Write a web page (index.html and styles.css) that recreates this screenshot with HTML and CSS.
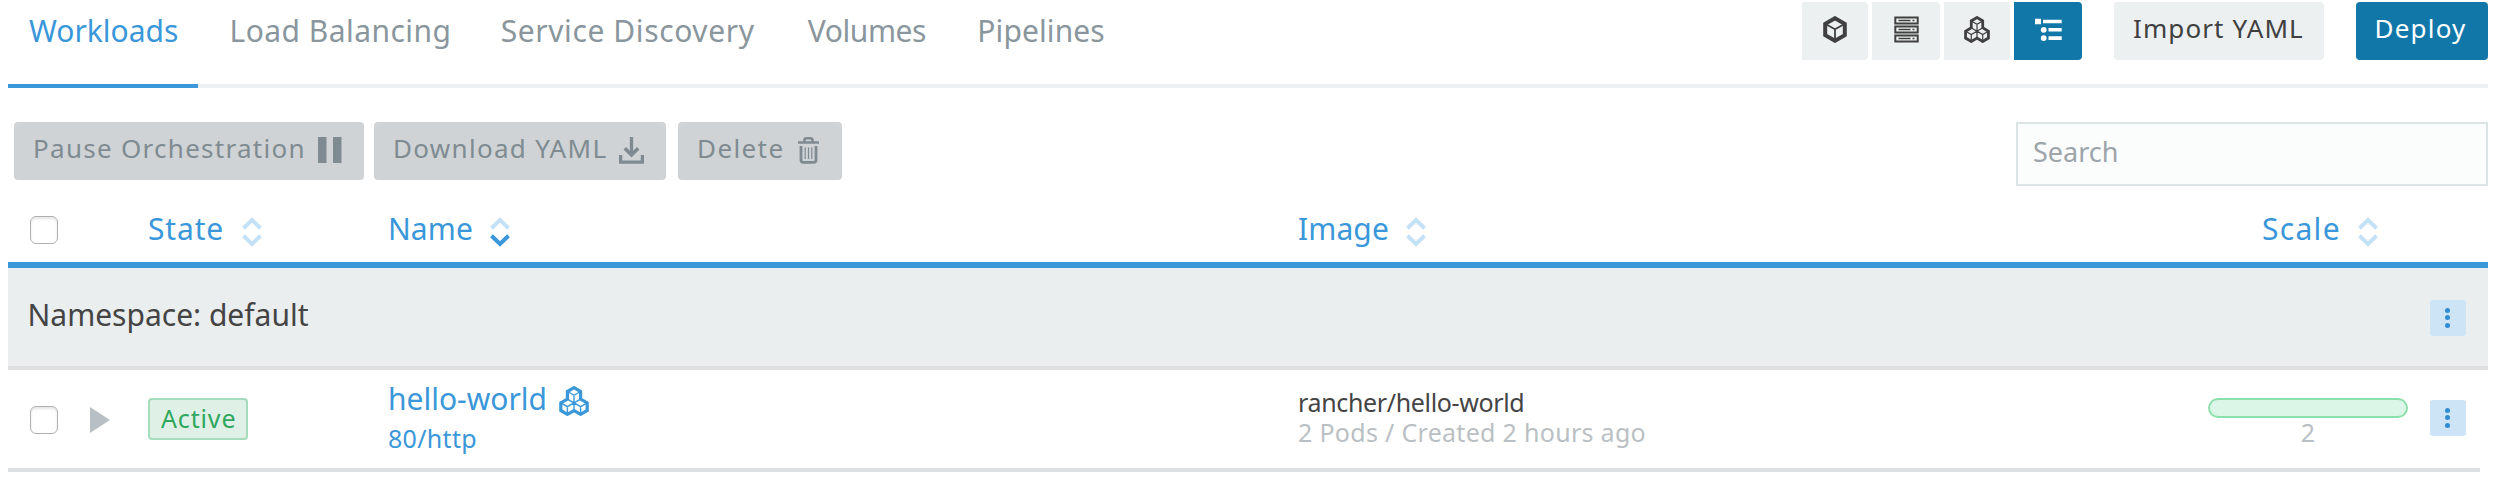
FILE: index.html
```html
<!DOCTYPE html>
<html lang="en">
<head>
<meta charset="utf-8">
<title>Workloads</title>
<link rel="stylesheet" href="styles.css">
</head>
<body>
<svg class="defs" width="0" height="0" aria-hidden="true">
  <symbol id="cubes" viewBox="0 0 30 30">
    <path d="M15 1.7 21.6 5.5V13.1L28.2 16.9V24.5L21.6 28.3 15 24.5 8.4 28.3 1.8 24.5V16.9L8.4 13.1V5.5Z" fill="none" stroke="currentColor" stroke-width="3.2"/>
    <path d="M8.4 5.5 15 9.3 21.6 5.5M15 9.3V16.9M8.4 13.1 15 16.9 21.6 13.1M15 16.9V24.5M1.8 16.9 8.4 20.7 15 16.9 21.6 20.7 28.2 16.9M8.4 20.7V28.3M21.6 20.7V28.3" fill="none" stroke="currentColor" stroke-width="1.4"/>
  </symbol>
  <symbol id="sort" viewBox="0 0 20 30">
    <path class="sort-up" d="M1.5 11.2 10 3 18.5 11.2" fill="none" stroke-width="4"/>
    <path class="sort-down" d="M1.5 18.8 10 27 18.5 18.8" fill="none" stroke-width="4"/>
  </symbol>
</svg>
<header class="topbar">
  <nav class="tabs">
    <a class="tab tab-workloads active">Workloads</a>
    <a class="tab tab-balancing">Load Balancing</a>
    <a class="tab tab-discovery">Service Discovery</a>
    <a class="tab tab-volumes">Volumes</a>
    <a class="tab tab-pipelines">Pipelines</a>
  </nav>
  <div class="actions">
    <div class="views">
      <button class="view view-narrow"><svg width="24" height="27" viewBox="0 0 24 27"><path d="M12 2.2 21.8 7.8V19.2L12 24.8 2.2 19.2V7.8Z" fill="none" stroke="currentColor" stroke-width="4"/><path d="M3 8.3 12 13.2 21 8.3M12 13.2V24" fill="none" stroke="currentColor" stroke-width="1.8"/></svg></button>
      <button class="view"><svg width="25" height="27" viewBox="0 0 25 27"><g fill="none" stroke="currentColor" stroke-width="2"><path d="M1.3 1.5H23.7V7.5H1.3ZM1.3 10.5H23.7V16.5H1.3ZM1.3 19.5H23.7V25.5H1.3Z"/><path d="M4.5 4.5H16.5M18.5 4.5H20.5M4.5 13.5H16.5M18.5 13.5H20.5M4.5 22.5H16.5M18.5 22.5H20.5" stroke-width="1.6"/></g></svg></button>
      <button class="view view-narrow"><svg width="26" height="27" viewBox="0 0 30 30" preserveAspectRatio="none"><use href="#cubes"/></svg></button>
      <button class="view selected"><svg width="27" height="24" viewBox="0 0 27 24"><path d="M0 .7H6V6.3H0ZM8 1.7H26.7V5.3H8ZM13.5 10H26.7V13.6H13.5ZM13.5 18.3H26.7V21.9H13.5Z" fill="currentColor"/><circle cx="8.7" cy="11.8" r="2.9" fill="currentColor"/><circle cx="8.7" cy="20.1" r="2.9" fill="currentColor"/></svg></button>
    </div>
    <button class="btn btn-import">Import YAML</button>
    <button class="btn btn-deploy">Deploy</button>
  </div>
</header>

<section class="toolbar">
  <button class="bulk bulk-pause">Pause Orchestration<svg width="24" height="26" viewBox="0 0 24 26"><path d="M0 0H8.5V26H0ZM15 0H23.5V26H15Z" fill="currentColor"/></svg></button>
  <button class="bulk bulk-download">Download YAML<svg width="25" height="27" viewBox="0 0 25 27"><path d="M1.6 18V25.2H23.4V18M12.5 0V17" fill="none" stroke="currentColor" stroke-width="3.3"/><path d="M5.8 11.2 12.5 18 19.2 11.2" fill="none" stroke="currentColor" stroke-width="3.6"/></svg></button>
  <button class="bulk bulk-delete">Delete<svg width="21" height="27" viewBox="0 0 21 27"><path d="M0 5.5H21M6.5 5V3.2Q6.5 1.3 8.5 1.3H12.5Q14.5 1.3 14.5 3.2V5" fill="none" stroke="currentColor" stroke-width="2.6"/><path d="M3 9V23Q3 25.3 5.3 25.3H15.7Q18 25.3 18 23V9" fill="none" stroke="currentColor" stroke-width="2.8"/><path d="M7.2 10.5V22M10.5 10.5V22M13.8 10.5V22" stroke="currentColor" stroke-width="1.2"/></svg></button>
  <div class="search">Search</div>
</section>

<main class="table">
  <div class="row head">
    <span class="cell-check"><span class="checkbox"></span></span>
    <span></span>
    <span class="th th-state">State<svg class="sort"><use href="#sort"/></svg></span>
    <span class="th th-name">Name<svg class="sort sort-desc"><use href="#sort"/></svg></span>
    <span class="th th-image">Image<svg class="sort"><use href="#sort"/></svg></span>
    <span class="th th-scale">Scale<svg class="sort"><use href="#sort"/></svg></span>
  </div>
  <div class="group">
    <span class="group-name">Namespace: default</span>
    <button class="menu"><i></i><i></i><i></i></button>
  </div>
  <div class="row item">
    <span class="cell-check"><span class="checkbox"></span></span>
    <svg class="expander" width="20" height="26" viewBox="0 0 20 26"><path d="M0 0 20 13 0 26Z" fill="currentColor"/></svg>
    <span><span class="badge">Active</span></span>
    <div class="workload">
      <div class="workload-name">hello-world<svg width="30" height="30"><use href="#cubes"/></svg></div>
      <div class="port">80/http</div>
    </div>
    <div class="image">
      <div class="image-name">rancher/hello-world</div>
      <div class="image-meta">2 Pods / Created 2 hours ago</div>
    </div>
    <div class="scale">
      <div class="bar"></div>
      <div class="count">2</div>
    </div>
    <button class="menu"><i></i><i></i><i></i></button>
  </div>
  <div class="divider"></div>
</main>
</body>
</html>
```
FILE: styles.css
```css
* { box-sizing: border-box; }
body {
  margin: 0;
  width: 2510px;
  height: 492px;
  overflow: hidden;
  padding: 0 22px 0 8px;
  background: #fff;
  font: 30px "Noto Sans", sans-serif;
  color: #444;
}
button { border: 0; margin: 0; font-family: inherit; }
svg { display: block; flex: none; }
.defs { position: absolute; }

.topbar {
  display: flex;
  justify-content: space-between;
  height: 88px;
  border-bottom: 4px solid #ecf0f1;
}
.tabs { display: flex; height: 88px; }
.tab {
  padding: 0 22px;
  line-height: 61px;
  color: #8a969d;
  white-space: nowrap;
}
.tab.active { color: #3a97d9; border-bottom: 4px solid #3a97d9; }
.tab-workloads { width: 190px; margin-right: 9.5px; padding-left: 21px; }
.tab-balancing { width: 271.2px; letter-spacing: .46px; }
.tab-discovery { width: 307.1px; letter-spacing: .6px; }
.tab-volumes { width: 169.5px; letter-spacing: -.43px; }
.tab-pipelines { letter-spacing: .11px; }

.actions { display: flex; padding-top: 2px; }
.views { display: flex; gap: 4px; margin-right: 32px; }
.view {
  display: flex;
  align-items: center;
  justify-content: center;
  width: 68px;
  height: 58px;
  padding: 0 0 3px;
  background: #ecf0f1;
  color: #404040;
  border-radius: 0 4px 4px 0;
}
.view-narrow { width: 66px; }
.view.selected { background: #1177a9; color: #fff; }
.btn {
  height: 58px;
  padding: 0 0 6px 19px;
  border-radius: 4px;
  font-size: 26px;
  line-height: 52px;
  text-align: left;
  white-space: nowrap;
}
.btn-import { width: 210px; margin-right: 32px; background: #ecf0f1; color: #404040; letter-spacing: 1.1px; }
.btn-deploy { width: 132px; padding-left: 18.5px; background: #1177a9; color: #fff; letter-spacing: 1.21px; }

.toolbar { display: flex; padding: 34px 0 0 6px; }
.bulk {
  display: flex;
  justify-content: space-between;
  align-items: center;
  height: 58px;
  padding: 0 22px 6px 19px;
  border-radius: 4px;
  background: #cfd3d6;
  color: #7f8b91;
  font-size: 26px;
  line-height: 52px;
  white-space: nowrap;
}
.bulk svg { margin-top: 4px; }
.bulk-pause { width: 350px; margin-right: 10px; letter-spacing: 1.28px; }
.bulk-download { width: 292px; margin-right: 12px; letter-spacing: 1.3px; }
.bulk-delete { width: 164px; padding-right: 23px; letter-spacing: 1.4px; }
.search {
  width: 472px;
  height: 64px;
  margin-left: auto;
  padding-left: 15px;
  border: 2px solid #dce4e6;
  background: #fbfdfd;
  color: #9da4aa;
  font-size: 27px;
  line-height: 56px;
}

.row {
  display: grid;
  grid-template-columns: 82px 58px 240px 910px 910px 222px 50px;
}
.head {
  height: 82px;
  align-items: center;
  padding-top: 9px;
  border-bottom: 6px solid #3a97d9;
  color: #3a97d9;
}
.cell-check { padding-left: 22px; }
.checkbox {
  display: block;
  width: 28px;
  height: 28px;
  border: 1.5px solid #b0b0b0;
  border-radius: 6px;
  background: #fff;
  box-shadow: inset 0 2px 3px #e6e6e6;
}
.head .checkbox { margin-top: 3px; }
.th { display: flex; align-items: center; line-height: 62px; }
.sort { width: 20px; height: 30px; margin: 7px 0 0 17.5px; stroke: #c5e1f5; }
.sort-desc { --down: #3a97d9; }
.sort-down { stroke: var(--down, #c5e1f5); }
.th-state { letter-spacing: .85px; }
.th-name { letter-spacing: .07px; }
.th-image { letter-spacing: .1px; }
.th-scale { padding-left: 54px; letter-spacing: 1.3px; }

.group {
  display: flex;
  justify-content: space-between;
  height: 102px;
  padding: 0 22px 0 19.5px;
  background: #eaeeef;
  border-bottom: 4px solid #dddfe1;
}
.group-name { line-height: 93px; }
.menu {
  display: flex;
  flex-direction: column;
  align-items: center;
  gap: 2.4px;
  width: 36px;
  height: 36px;
  padding: 8px 0 0;
  border-radius: 3px;
  background: #cde3f6;
}
.menu i { width: 5px; height: 5px; margin-right: 1px; border-radius: 50%; background: #2f8cd2; }
.group .menu { margin-top: 32px; }

.item { height: 98px; }
.item .checkbox { margin-top: 36px; }
.expander { margin-top: 37px; color: #b8c0c5; }
.badge {
  display: block;
  width: 100px;
  height: 42px;
  margin-top: 28px;
  padding-left: 11px;
  border: 2px solid #a5dcbd;
  border-radius: 4px;
  background: #dff1e7;
  color: #2fa75f;
  font-size: 25px;
  line-height: 37px;
  letter-spacing: .85px;
}
.workload { color: #3a97d9; }
.workload-name { display: flex; height: 57px; line-height: 57px; }
.workload-name svg { margin: 16px 0 0 12px; }
.port { font-size: 25px; line-height: 20px; letter-spacing: .3px; padding-top: 1px; }
.image { padding-top: 17px; font-size: 25px; line-height: 30px; }
.image-name { letter-spacing: -.35px; }
.image-meta { letter-spacing: .3px; color: #babfc4; }
.scale { width: 200px; padding-top: 28px; }
.bar { height: 20px; border: 2px solid #8ce0ae; border-radius: 10px; background: #dbf5e6; }
.count { font-size: 25px; line-height: 30px; text-align: center; color: #babfc4; margin-top: -1px; }
.item .menu { margin-top: 30px; }
.divider { width: 2472px; height: 4px; background: #dddfe1; }
```
